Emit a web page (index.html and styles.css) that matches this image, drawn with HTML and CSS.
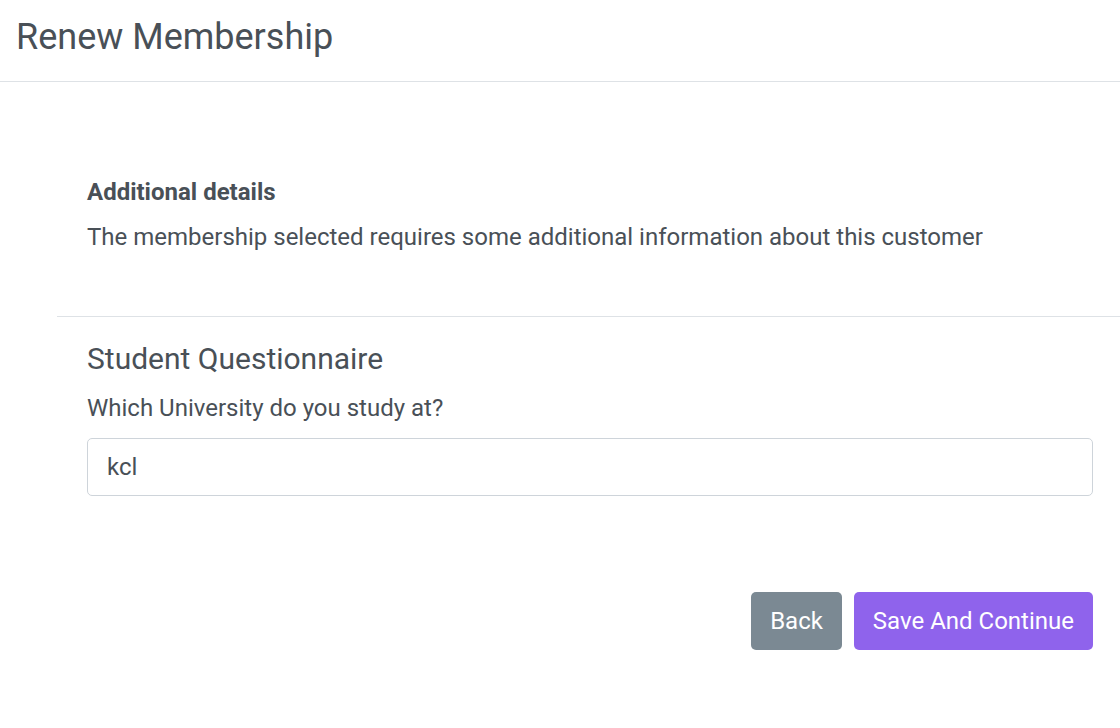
FILE: index.html
```html
<!DOCTYPE html>
<html>
<head>
<meta charset="utf-8">
<link rel="stylesheet" href="styles.css">
</head>
<body>
<header class="page-header">
  <h1 class="page-title">Renew Membership</h1>
</header>
<main class="page-body">
  <section class="intro">
    <h2 class="intro-title">Additional details</h2>
    <p class="intro-text">The membership selected requires some additional information about this customer</p>
  </section>
  <section class="questionnaire">
    <h3 class="q-title">Student Questionnaire</h3>
    <label class="q-label" for="uni">Which University do you study at?</label>
    <input class="q-input" id="uni" type="text" value="kcl">
    <div class="actions">
      <button class="btn btn-back" type="button">Back</button>
      <button class="btn btn-primary" type="button">Save And Continue</button>
    </div>
  </section>
</main>
</body>
</html>
```

FILE: styles.css
```css
* { box-sizing: border-box; }
html, body { margin: 0; padding: 0; background: #fff; }
body {
  font-family: Roboto, "Liberation Sans", Arial, sans-serif;
  color: #495057;
  width: 1120px;
  height: 728px;
  overflow: hidden;
}
.page-header {
  height: 82px;
  border-bottom: 1px solid #dee2e6;
  padding: 0 16px;
  display: flex;
  align-items: center;
}
.page-title {
  margin: 0 0 8px 0;
  font-size: 36px;
  font-weight: 400;
  line-height: 44px;
}
.page-body {
  padding-left: 57px;
}
.intro {
  padding: 95px 27px 64px 30px;
  border-bottom: 1px solid #dee2e6;
}
.intro-title {
  margin: 0;
  font-size: 24px;
  font-weight: 700;
  line-height: 30px;
}
.intro-text {
  margin: 15px 0 0 0;
  font-size: 24px;
  line-height: 30px;
}
.questionnaire {
  padding: 24px 27px 0 30px;
}
.q-title {
  margin: 0;
  font-size: 30px;
  font-weight: 400;
  line-height: 36px;
}
.q-label {
  display: block;
  margin-top: 16px;
  font-size: 24px;
  line-height: 30px;
}
.q-input {
  display: block;
  width: 100%;
  height: 58px;
  margin-top: 15px;
  padding: 0 19px;
  border: 1px solid #ced4da;
  border-radius: 5px;
  font-family: inherit;
  font-size: 24px;
  color: #495057;
  outline: none;
}
.actions {
  display: flex;
  justify-content: flex-end;
  gap: 12px;
  margin-top: 96px;
}
.btn {
  height: 58px;
  border: none;
  border-radius: 5px;
  padding: 0 19px;
  font-family: inherit;
  font-size: 24px;
  color: #fff;
}
.btn-back { background: #7b8993; }
.btn-primary { background: #8f63ec; }
```
